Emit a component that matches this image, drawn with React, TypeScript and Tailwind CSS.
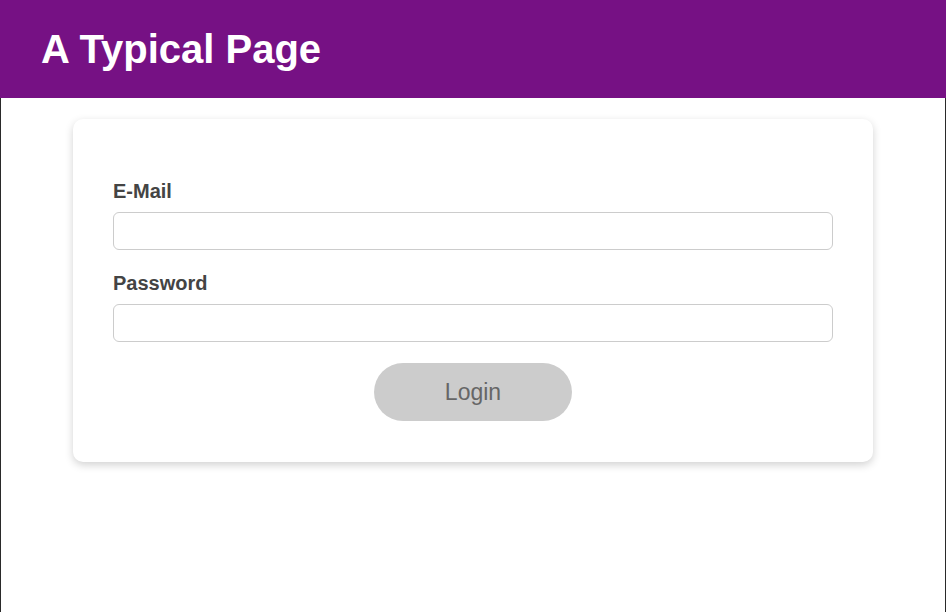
import React from 'react';

const Field: React.FC<{ label: string; type: string; first?: boolean }> = ({ label, type, first }) => (
  <div className={first ? '' : 'mt-[22px]'}>
    <label className="block text-[20px] font-bold leading-[23px] text-[#444]">{label}</label>
    <input
      type={type}
      className="mt-[9px] block h-[38px] w-full rounded-[6px] border border-[#ccc] bg-white px-3 outline-none"
    />
  </div>
);

const App: React.FC = () => {
  return (
    <div className="flex min-h-[612px] flex-col bg-white" style={{ fontFamily: '"Liberation Sans", Arial, sans-serif' }}>
      <header className="flex h-[98px] items-center bg-[#761184] px-[41px]">
        <h1 className="text-[40px] font-bold leading-[46px] text-white">A Typical Page</h1>
      </header>
      <main className="flex-1 border-x border-[#2a2a2a] pt-[21px]">
        <div className="mx-auto w-[800px] rounded-[10px] bg-white px-[40px] pb-[41px] pt-[61px] shadow-[0_3px_9px_rgba(0,0,0,0.18)]">
          <form onSubmit={(e) => e.preventDefault()}>
            <Field label="E-Mail" type="email" first />
            <Field label="Password" type="password" />
            <div className="mt-[21px] flex justify-center">
              <button
                type="submit"
                className="h-[58px] w-[198px] rounded-full bg-[#ccc] text-[23px] text-[#666]"
              >
                Login
              </button>
            </div>
          </form>
        </div>
      </main>
    </div>
  );
};

export default App;
